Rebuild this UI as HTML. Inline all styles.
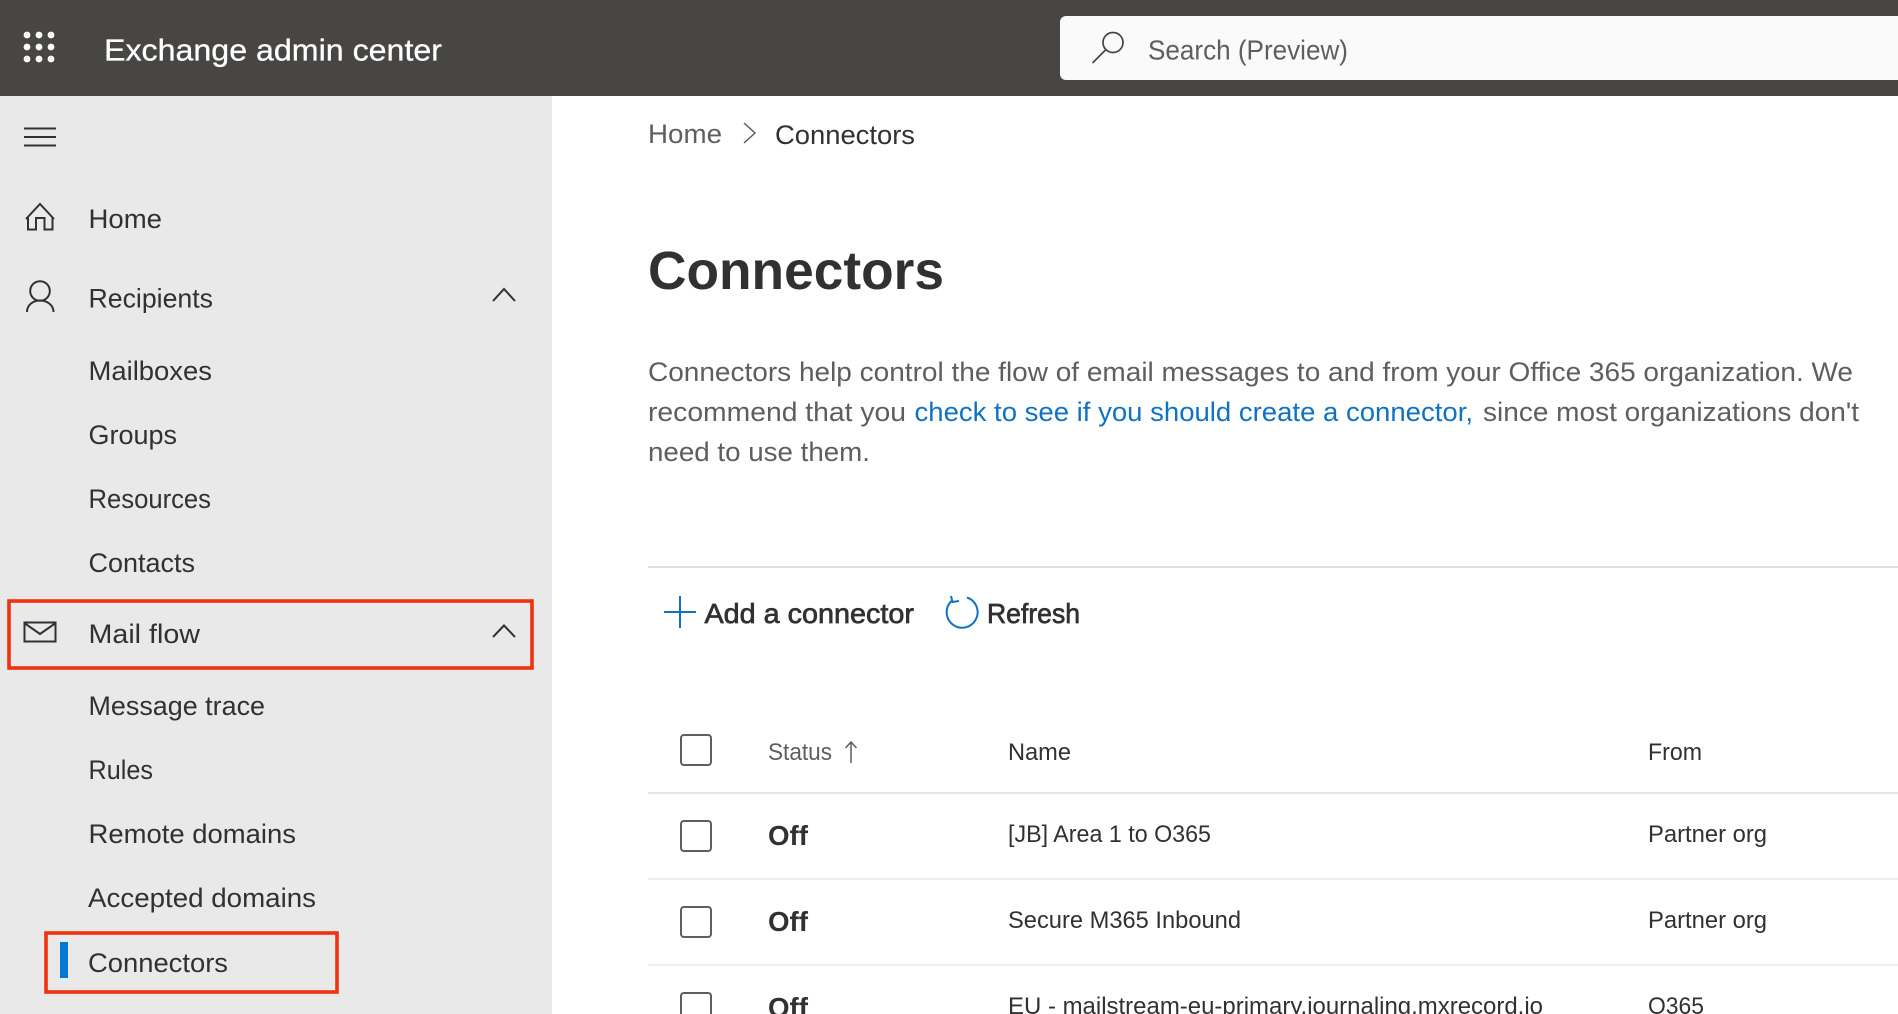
<!DOCTYPE html>
<html lang="en"><head><meta charset="utf-8"><title>Exchange admin center</title>
<style>
html,body{margin:0;padding:0;background:#fff;width:1898px;height:1014px;overflow:hidden}
svg{display:block}
text{font-family:"Liberation Sans",Arial,sans-serif;font-size:27px;fill:#323130}
.g{fill:#605e5c}
.h{fill:#323130;stroke:#323130;stroke-width:.7px}
.i{fill:none;stroke:#323130;stroke-width:2}
</style></head><body>
<svg xmlns="http://www.w3.org/2000/svg" width="1898" height="1014" viewBox="0 0 1898 1014">
<rect width="1898" height="1014" fill="#fff"/>
<rect y="0" width="1898" height="96" fill="#484644"/>
<rect y="96" width="552" height="918" fill="#e9e9e9"/>

<!-- header -->
<g fill="#fff"><circle cx="27" cy="35" r="3.4"/><circle cx="39" cy="35" r="3.4"/><circle cx="51" cy="35" r="3.4"/><circle cx="27" cy="47" r="3.4"/><circle cx="39" cy="47" r="3.4"/><circle cx="51" cy="47" r="3.4"/><circle cx="27" cy="59" r="3.4"/><circle cx="39" cy="59" r="3.4"/><circle cx="51" cy="59" r="3.4"/></g>
<text x="104" y="60.5" style="font-size:31px;fill:#fff;stroke:#fff;stroke-width:.3px" textLength="338" lengthAdjust="spacingAndGlyphs">Exchange admin center</text>
<rect x="1060" y="16" width="860" height="64" rx="6" fill="#fbfafa"/>
<circle cx="1113" cy="42.5" r="10" fill="none" stroke="#444" stroke-width="1.7"/>
<path d="M1105.5 50 L1092.5 63" fill="none" stroke="#444" stroke-width="1.7"/>
<text x="1148" y="59.5" class="g" style="font-size:28px" textLength="200" lengthAdjust="spacingAndGlyphs">Search (Preview)</text>

<!-- sidebar -->
<path class="i" d="M24 128.5H56M24 137H56M24 145.5H56"/>
<path class="i" d="M26 219 L40 204 L54 219 M28 217 V229.5 H36 V218 H44.5 V229.5 H52.5 V217"/>
<text x="88.5" y="228" textLength="73.5" lengthAdjust="spacingAndGlyphs">Home</text>
<circle class="i" cx="40" cy="291" r="9.8"/>
<path class="i" d="M27 312 C27 305 33 300.5 40 300.5 S53.5 305 53.5 312"/>
<text x="88.5" y="307.5" textLength="124.5" lengthAdjust="spacingAndGlyphs">Recipients</text>
<path class="i" d="M493 301 L504 289 L515 301"/>
<text x="88.5" y="380" textLength="123.5" lengthAdjust="spacingAndGlyphs">Mailboxes</text>
<text x="88.5" y="444" textLength="88.5" lengthAdjust="spacingAndGlyphs">Groups</text>
<text x="88.5" y="508" textLength="122.5" lengthAdjust="spacingAndGlyphs">Resources</text>
<text x="88.5" y="572" textLength="106.5" lengthAdjust="spacingAndGlyphs">Contacts</text>

<path class="i" d="M24.5 622.5H55.5V641.5H24.5Z M25 623.5 L40 634 L55 623.5"/>
<text x="88.5" y="643" textLength="111.5" lengthAdjust="spacingAndGlyphs">Mail flow</text>
<path class="i" d="M493 637 L504 625.5 L515 637"/>
<text x="88.5" y="715" textLength="176.5" lengthAdjust="spacingAndGlyphs">Message trace</text>
<text x="88.5" y="779" textLength="64.5" lengthAdjust="spacingAndGlyphs">Rules</text>
<text x="88.5" y="843" textLength="207.5" lengthAdjust="spacingAndGlyphs">Remote domains</text>
<text x="88" y="907" textLength="228" lengthAdjust="spacingAndGlyphs">Accepted domains</text>
<rect x="60" y="942" width="8" height="36" fill="#0078d4"/>
<text x="88" y="972" textLength="140" lengthAdjust="spacingAndGlyphs">Connectors</text>
<rect x="9" y="601" width="523" height="67" fill="none" stroke="#f0320f" stroke-width="3.6"/>
<rect x="46" y="933" width="291" height="59" fill="none" stroke="#f0320f" stroke-width="3.6"/>

<!-- breadcrumb -->
<text x="648" y="143" class="g" textLength="74" lengthAdjust="spacingAndGlyphs">Home</text>
<path d="M744 123 L755 133 L744 143" fill="none" stroke="#605e5c" stroke-width="1.5"/>
<text x="775" y="144" textLength="140" lengthAdjust="spacingAndGlyphs">Connectors</text>

<text x="648" y="289" style="font-size:54px;font-weight:bold" textLength="296" lengthAdjust="spacingAndGlyphs">Connectors</text>

<text x="648" y="381" class="g" textLength="1205" lengthAdjust="spacingAndGlyphs">Connectors help control the flow of email messages to and from your Office 365 organization. We</text>
<text x="648" y="421" class="g" textLength="258" lengthAdjust="spacingAndGlyphs">recommend that you</text>
<text x="914.5" y="421" style="fill:#0f72c2" textLength="558.5" lengthAdjust="spacingAndGlyphs">check to see if you should create a connector,</text>
<text x="1483" y="421" class="g" textLength="376" lengthAdjust="spacingAndGlyphs">since most organizations don't</text>
<text x="648" y="461" class="g" textLength="222" lengthAdjust="spacingAndGlyphs">need to use them.</text>

<rect x="648" y="566" width="1250" height="2" fill="#e1dfdd"/>

<!-- command bar -->
<path d="M664 612H696M680 596V628" fill="none" stroke="#0f72c2" stroke-width="2"/>
<text x="704.5" y="623" class="h" style="font-size:28px" textLength="209.5" lengthAdjust="spacingAndGlyphs">Add a connector</text>
<path d="M967 597.5 A15.5 15.5 0 1 1 952 600.5 M951 596 L952.5 602 L959 601" fill="none" stroke="#0f72c2" stroke-width="2"/>
<text x="987" y="623" class="h" style="font-size:28px" textLength="93" lengthAdjust="spacingAndGlyphs">Refresh</text>

<!-- table -->
<g fill="none" stroke="#605e5c" stroke-width="2">
<rect x="681" y="735" width="30" height="30" rx="3"/>
<rect x="681" y="821" width="30" height="30" rx="3"/>
<rect x="681" y="907" width="30" height="30" rx="3"/>
<rect x="681" y="993" width="30" height="30" rx="3"/>
</g>
<rect x="648" y="792" width="1250" height="2" fill="#e8e7e6"/>
<rect x="648" y="878" width="1250" height="2" fill="#f0efee"/>
<rect x="648" y="964" width="1250" height="2" fill="#f0efee"/>

<text x="768" y="760" style="font-size:24px" class="g" textLength="64" lengthAdjust="spacingAndGlyphs">Status</text>
<path d="M851 763V742M845.5 748 L851 742 L856.5 748" fill="none" stroke="#605e5c" stroke-width="1.5"/>
<text x="1008" y="760" style="font-size:24px" textLength="63" lengthAdjust="spacingAndGlyphs">Name</text>
<text x="1648" y="760" style="font-size:24px" textLength="54" lengthAdjust="spacingAndGlyphs">From</text>

<text x="768" y="845" style="font-size:28px;font-weight:bold" textLength="40" lengthAdjust="spacingAndGlyphs">Off</text>
<text x="1008" y="842" style="font-size:24px" textLength="203" lengthAdjust="spacingAndGlyphs">[JB] Area 1 to O365</text>
<text x="1648" y="842" style="font-size:24px" textLength="119" lengthAdjust="spacingAndGlyphs">Partner org</text>

<text x="768" y="931" style="font-size:28px;font-weight:bold" textLength="40" lengthAdjust="spacingAndGlyphs">Off</text>
<text x="1008" y="928" style="font-size:24px" textLength="233" lengthAdjust="spacingAndGlyphs">Secure M365 Inbound</text>
<text x="1648" y="928" style="font-size:24px" textLength="119" lengthAdjust="spacingAndGlyphs">Partner org</text>

<text x="768" y="1017" style="font-size:28px;font-weight:bold" textLength="40" lengthAdjust="spacingAndGlyphs">Off</text>
<text x="1008" y="1014" style="font-size:24px" textLength="535" lengthAdjust="spacingAndGlyphs">EU - mailstream-eu-primary.journaling.mxrecord.io</text>
<text x="1648" y="1014" style="font-size:24px" textLength="56" lengthAdjust="spacingAndGlyphs">O365</text>
</svg>
</body></html>
